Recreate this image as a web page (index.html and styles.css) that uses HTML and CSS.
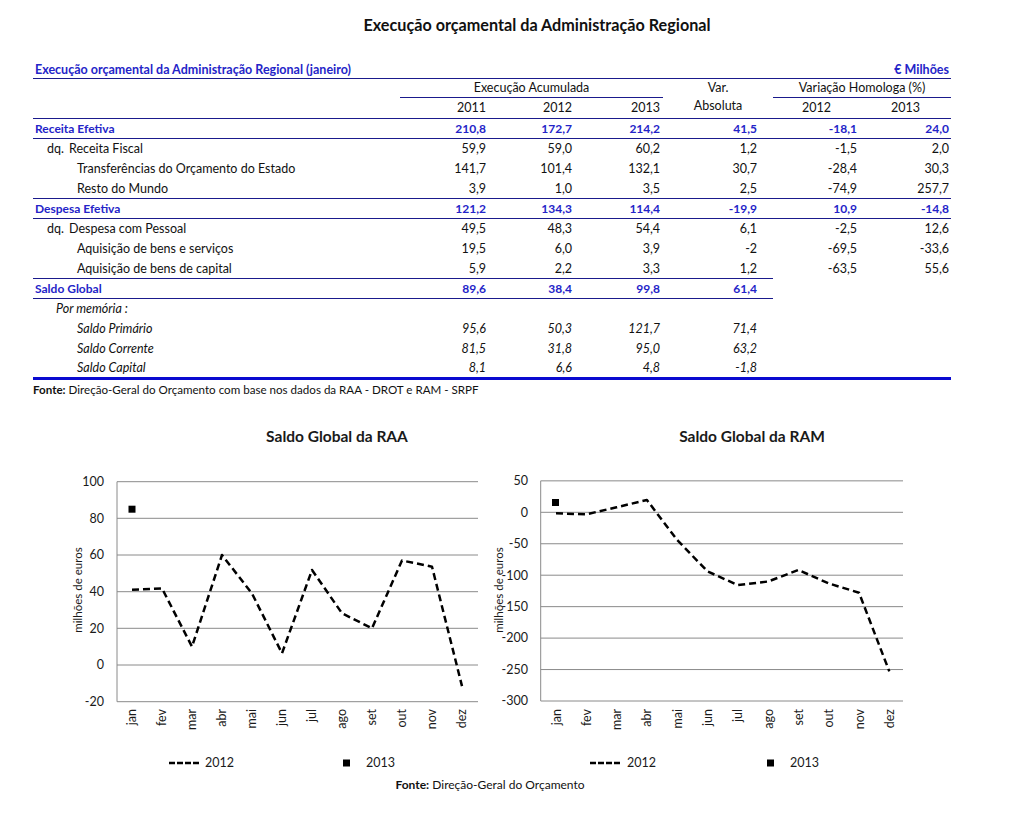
FILE: index.html
```html
<!DOCTYPE html>
<html lang="pt">
<head>
<meta charset="utf-8">
<title>Execução orçamental da Administração Regional</title>
<link rel="stylesheet" href="styles.css">
</head>
<body>
<div class="page">
  <h1 class="main-title">Execução orçamental da Administração Regional</h1>

  <section class="report">
    <div class="report-head">
      <span>Execução orçamental da Administração Regional (janeiro)</span>
      <span>€ Milhões</span>
    </div>
    <table class="data">
      <colgroup>
        <col class="c-label"><col class="c-gap"><col class="c-n1"><col class="c-n2"><col class="c-n3"><col class="c-var"><col class="c-h1"><col class="c-h2">
      </colgroup>
      <thead>
        <tr class="h1">
          <th class="lbl-head" rowspan="2"></th>
          <th class="gap" rowspan="2"></th>
          <th class="grp" colspan="3">Execução Acumulada</th>
          <th class="ctr">Var.</th>
          <th class="grp" colspan="2">Variação Homologa (%)</th>
        </tr>
        <tr class="h2">
          <th class="num ul">2011</th>
          <th class="num ul">2012</th>
          <th class="num ul">2013</th>
          <th class="ctr ul top">Absoluta</th>
          <th class="ctr ul">2012</th>
          <th class="ctr ul">2013</th>
        </tr>
      </thead>
      <tbody>
        <tr class="tot full">
          <td colspan="2">Receita Efetiva</td><td class="num">210,8</td><td class="num">172,7</td><td class="num">214,2</td><td class="num">41,5</td><td class="num">-18,1</td><td class="num">24,0</td>
        </tr>
        <tr>
          <td colspan="2" class="l1"><span class="dq">dq.</span>Receita Fiscal</td><td class="num">59,9</td><td class="num">59,0</td><td class="num">60,2</td><td class="num">1,2</td><td class="num">-1,5</td><td class="num">2,0</td>
        </tr>
        <tr>
          <td colspan="2" class="l2">Transferências do Orçamento do Estado</td><td class="num">141,7</td><td class="num">101,4</td><td class="num">132,1</td><td class="num">30,7</td><td class="num">-28,4</td><td class="num">30,3</td>
        </tr>
        <tr>
          <td colspan="2" class="l2">Resto do Mundo</td><td class="num">3,9</td><td class="num">1,0</td><td class="num">3,5</td><td class="num">2,5</td><td class="num">-74,9</td><td class="num">257,7</td>
        </tr>
        <tr class="tot full">
          <td colspan="2">Despesa Efetiva</td><td class="num">121,2</td><td class="num">134,3</td><td class="num">114,4</td><td class="num">-19,9</td><td class="num">10,9</td><td class="num">-14,8</td>
        </tr>
        <tr>
          <td colspan="2" class="l1"><span class="dq">dq.</span>Despesa com Pessoal</td><td class="num">49,5</td><td class="num">48,3</td><td class="num">54,4</td><td class="num">6,1</td><td class="num">-2,5</td><td class="num">12,6</td>
        </tr>
        <tr>
          <td colspan="2" class="l2">Aquisição de bens e serviços</td><td class="num">19,5</td><td class="num">6,0</td><td class="num">3,9</td><td class="num">-2</td><td class="num">-69,5</td><td class="num">-33,6</td>
        </tr>
        <tr>
          <td colspan="2" class="l2">Aquisição de bens de capital</td><td class="num">5,9</td><td class="num">2,2</td><td class="num">3,3</td><td class="num">1,2</td><td class="num">-63,5</td><td class="num">55,6</td>
        </tr>
        <tr class="tot part">
          <td colspan="2" class="b">Saldo Global</td><td class="num b">89,6</td><td class="num b">38,4</td><td class="num b">99,8</td><td class="num b">61,4</td><td></td><td></td>
        </tr>
        <tr class="memo">
          <td colspan="2" class="m1">Por memória :</td><td></td><td></td><td></td><td></td><td></td><td></td>
        </tr>
        <tr class="memo">
          <td colspan="2" class="l2">Saldo Primário</td><td class="num">95,6</td><td class="num">50,3</td><td class="num">121,7</td><td class="num">71,4</td><td></td><td></td>
        </tr>
        <tr class="memo">
          <td colspan="2" class="l2">Saldo Corrente</td><td class="num">81,5</td><td class="num">31,8</td><td class="num">95,0</td><td class="num">63,2</td><td></td><td></td>
        </tr>
        <tr class="memo last">
          <td colspan="2" class="l2">Saldo Capital</td><td class="num">8,1</td><td class="num">6,6</td><td class="num">4,8</td><td class="num">-1,8</td><td></td><td></td>
        </tr>
      </tbody>
    </table>
    <p class="source"><b>Fonte:</b> Direção-Geral do Orçamento com base nos dados da RAA - DROT e RAM - SRPF</p>
  </section>

  <section class="charts">
    <div class="chart-row">
      <svg class="chart chart-raa" width="420" height="355" viewBox="0 0 420 355">
        <text class="ctitle" x="277" y="22" text-anchor="middle">Saldo Global da RAA</text>
        <g class="grid">
          <line x1="57" y1="61.7" x2="418" y2="61.7"/>
          <line x1="57" y1="98.3" x2="418" y2="98.3"/>
          <line x1="57" y1="135" x2="418" y2="135"/>
          <line x1="57" y1="171.7" x2="418" y2="171.7"/>
          <line x1="57" y1="208.3" x2="418" y2="208.3"/>
          <line x1="57" y1="245" x2="418" y2="245"/>
          <line x1="57" y1="281.7" x2="418" y2="281.7"/>
          <line x1="57" y1="61.7" x2="57" y2="281.7"/>
        </g>
        <g class="ytick" text-anchor="end">
          <text x="44" y="66">100</text>
          <text x="44" y="102.6">80</text>
          <text x="44" y="139.3">60</text>
          <text x="44" y="176">40</text>
          <text x="44" y="212.6">20</text>
          <text x="44" y="249.3">0</text>
          <text x="44" y="286">-20</text>
        </g>
        <text class="ytitle" transform="translate(22 170) rotate(-90)" text-anchor="middle">milhões de euros</text>
        <g class="xtick" text-anchor="end">
          <text transform="translate(76 289) rotate(-90)">jan</text>
          <text transform="translate(106 289) rotate(-90)">fev</text>
          <text transform="translate(136 289) rotate(-90)">mar</text>
          <text transform="translate(166 289) rotate(-90)">abr</text>
          <text transform="translate(196 289) rotate(-90)">mai</text>
          <text transform="translate(226 289) rotate(-90)">jun</text>
          <text transform="translate(256 289) rotate(-90)">jul</text>
          <text transform="translate(286 289) rotate(-90)">ago</text>
          <text transform="translate(316 289) rotate(-90)">set</text>
          <text transform="translate(346 289) rotate(-90)">out</text>
          <text transform="translate(376 289) rotate(-90)">nov</text>
          <text transform="translate(406 289) rotate(-90)">dez</text>
        </g>
        <polyline class="series" points="72,169.8 102,168.4 132,226.7 162,135 192,173.5 222,233.3 252,150 282,193.3 312,208.3 342,140.5 372,146.7 402,266.1"/>
        <rect class="mark" x="68.5" y="85.7" width="7" height="7"/>
        <line class="series legend-line" x1="109" y1="343" x2="141" y2="343"/>
        <text class="legend" x="145" y="347">2012</text>
        <rect class="mark" x="283" y="339.5" width="7" height="7"/>
        <text class="legend" x="306" y="347">2013</text>
      </svg>
      <svg class="chart chart-ram" width="440" height="355" viewBox="0 0 440 355">
        <text class="ctitle" x="272" y="22" text-anchor="middle">Saldo Global da RAM</text>
        <g class="grid">
          <line x1="60.7" y1="60.85" x2="423" y2="60.85"/>
          <line x1="60.7" y1="92.3" x2="423" y2="92.3"/>
          <line x1="60.7" y1="123.75" x2="423" y2="123.75"/>
          <line x1="60.7" y1="155.2" x2="423" y2="155.2"/>
          <line x1="60.7" y1="186.65" x2="423" y2="186.65"/>
          <line x1="60.7" y1="218.1" x2="423" y2="218.1"/>
          <line x1="60.7" y1="249.55" x2="423" y2="249.55"/>
          <line x1="60.7" y1="281" x2="423" y2="281"/>
          <line x1="60.7" y1="60.85" x2="60.7" y2="281"/>
        </g>
        <g class="ytick" text-anchor="end">
          <text x="48" y="65.15">50</text>
          <text x="48" y="96.6">0</text>
          <text x="48" y="128">-50</text>
          <text x="48" y="159.5">-100</text>
          <text x="48" y="191">-150</text>
          <text x="48" y="222.4">-200</text>
          <text x="48" y="253.85">-250</text>
          <text x="48" y="285.3">-300</text>
        </g>
        <text class="ytitle" transform="translate(23 170) rotate(-90)" text-anchor="middle">milhões de euros</text>
        <g class="xtick" text-anchor="end">
          <text transform="translate(80.5 289) rotate(-90)">jan</text>
          <text transform="translate(110.8 289) rotate(-90)">fev</text>
          <text transform="translate(141.1 289) rotate(-90)">mar</text>
          <text transform="translate(171.4 289) rotate(-90)">abr</text>
          <text transform="translate(201.7 289) rotate(-90)">mai</text>
          <text transform="translate(232 289) rotate(-90)">jun</text>
          <text transform="translate(262.3 289) rotate(-90)">jul</text>
          <text transform="translate(292.6 289) rotate(-90)">ago</text>
          <text transform="translate(322.9 289) rotate(-90)">set</text>
          <text transform="translate(353.2 289) rotate(-90)">out</text>
          <text transform="translate(383.5 289) rotate(-90)">nov</text>
          <text transform="translate(413.8 289) rotate(-90)">dez</text>
        </g>
        <polyline class="series" points="76,93.3 106.3,94.3 136.6,87.3 166.9,80 197.2,120 227.5,151.4 257.8,165 288.1,161.5 318.4,150 348.7,163.4 379,172.7 409.3,251.4"/>
        <rect class="mark" x="72" y="79" width="7" height="7"/>
        <line class="series legend-line" x1="110" y1="343" x2="142" y2="343"/>
        <text class="legend" x="147" y="347">2012</text>
        <rect class="mark" x="287" y="339.5" width="7" height="7"/>
        <text class="legend" x="310" y="347">2013</text>
      </svg>
    </div>
    <p class="chart-source"><b>Fonte:</b> Direção-Geral do Orçamento</p>
  </section>
</div>
</body>
</html>
```

FILE: styles.css
```css
* { box-sizing: border-box; }

body {
  margin: 0;
  background: #ffffff;
  color: #111111;
  font-family: Lato, "Open Sans", "Liberation Sans", sans-serif;
}

.page {
  width: 1018px;
  height: 823px;
  overflow: hidden;
}

.main-title {
  margin: 0;
  padding: 15px 0 0 56px;
  height: 60px;
  line-height: 20px;
  font-size: 16.2px;
  font-weight: 700;
  text-align: center;
  color: #111;
}

.report {
  margin-left: 33px;
  width: 918px;
}

.report-head {
  display: flex;
  justify-content: space-between;
  align-items: center;
  height: 19px;
  padding: 0 2px;
  border-bottom: 1px solid #1a1a8c;
  font-size: 12.5px;
  font-weight: 700;
  color: #2424c8;
}

.data {
  width: 918px;
  border-collapse: collapse;
  table-layout: fixed;
  font-size: 12.5px;
  color: #111;
}

.c-label { width: 355px; }
.c-gap { width: 12px; }
.c-n1 { width: 89px; }
.c-n2 { width: 86px; }
.c-n3 { width: 88px; }
.c-var { width: 110px; }
.c-h1 { width: 87px; }
.c-h2 { width: 91px; }

.data th {
  font-weight: 400;
  padding: 0;
  white-space: nowrap;
}

.data .h1 th { height: 18px; line-height: 18px; }
.data .h2 th { height: 20px; line-height: 20px; }

.data .grp {
  text-align: center;
  border-bottom: 1px solid #1a1a8c;
}

.data .lbl-head { border-bottom: 1px solid #1a1a8c; }

.data .ul { border-bottom: 1px solid #1a1a8c; }

.data .ctr { text-align: center; }
.data .top { vertical-align: top; line-height: 16px !important; }

.data td {
  height: 20px;
  padding: 0;
  white-space: nowrap;
}

.data th.num { text-align: right; padding-right: 3px; }
.data td.num { text-align: right; padding-right: 3px; }

.data td:nth-child(5) { padding-right: 16px; }
.data td:nth-child(6) { padding-right: 3px; }
.data td:nth-child(7) { padding-right: 2px; }

.data .tot td {
  color: #2424c8;
  font-weight: 700;
  font-size: 12px;
}

.data .tot td:first-child { padding-left: 2px; }

.data .full td {
  border-top: 1px solid #1a1a8c;
  border-bottom: 1px solid #1a1a8c;
}

.data .part td.b {
  border-top: 1px solid #1a1a8c;
  border-bottom: 1px solid #1a1a8c;
}

.data .l1 { padding-left: 14px; }
.data .dq { display: inline-block; width: 22px; }
.data .l2 { padding-left: 44px; }
.data .m1 { padding-left: 23px; }

.data .memo td { font-style: italic; }

.data .last td { border-bottom: 3px solid #0a0ad0; }

.source {
  margin: 3px 0 0 0;
  font-size: 11.6px;
  line-height: 14px;
  color: #111;
}

.charts {
  margin: 23px 0 0 60px;
  width: 860px;
}

.chart-row {
  display: flex;
}

.chart { display: block; }

.chart text {
  font-family: Lato, "Open Sans", "Liberation Sans", sans-serif;
  fill: #1a1a1a;
}

.chart .ctitle {
  font-size: 15.5px;
  font-weight: 700;
}

.chart .grid line {
  stroke: #8a8a8a;
  stroke-width: 1;
}

.chart .ytick text,
.chart .xtick text,
.chart .legend {
  font-size: 12.5px;
}

.chart .ytitle { font-size: 11.5px; }

.chart .series {
  fill: none;
  stroke: #000;
  stroke-width: 2.5;
  stroke-dasharray: 7 4;
  stroke-linejoin: round;
}

.chart .legend-line { stroke-dasharray: 6 2; }

.chart .mark { fill: #000; }

.chart-source {
  margin: 2px 0 0 0;
  text-align: center;
  font-size: 12px;
  line-height: 15px;
  color: #111;
}
```
